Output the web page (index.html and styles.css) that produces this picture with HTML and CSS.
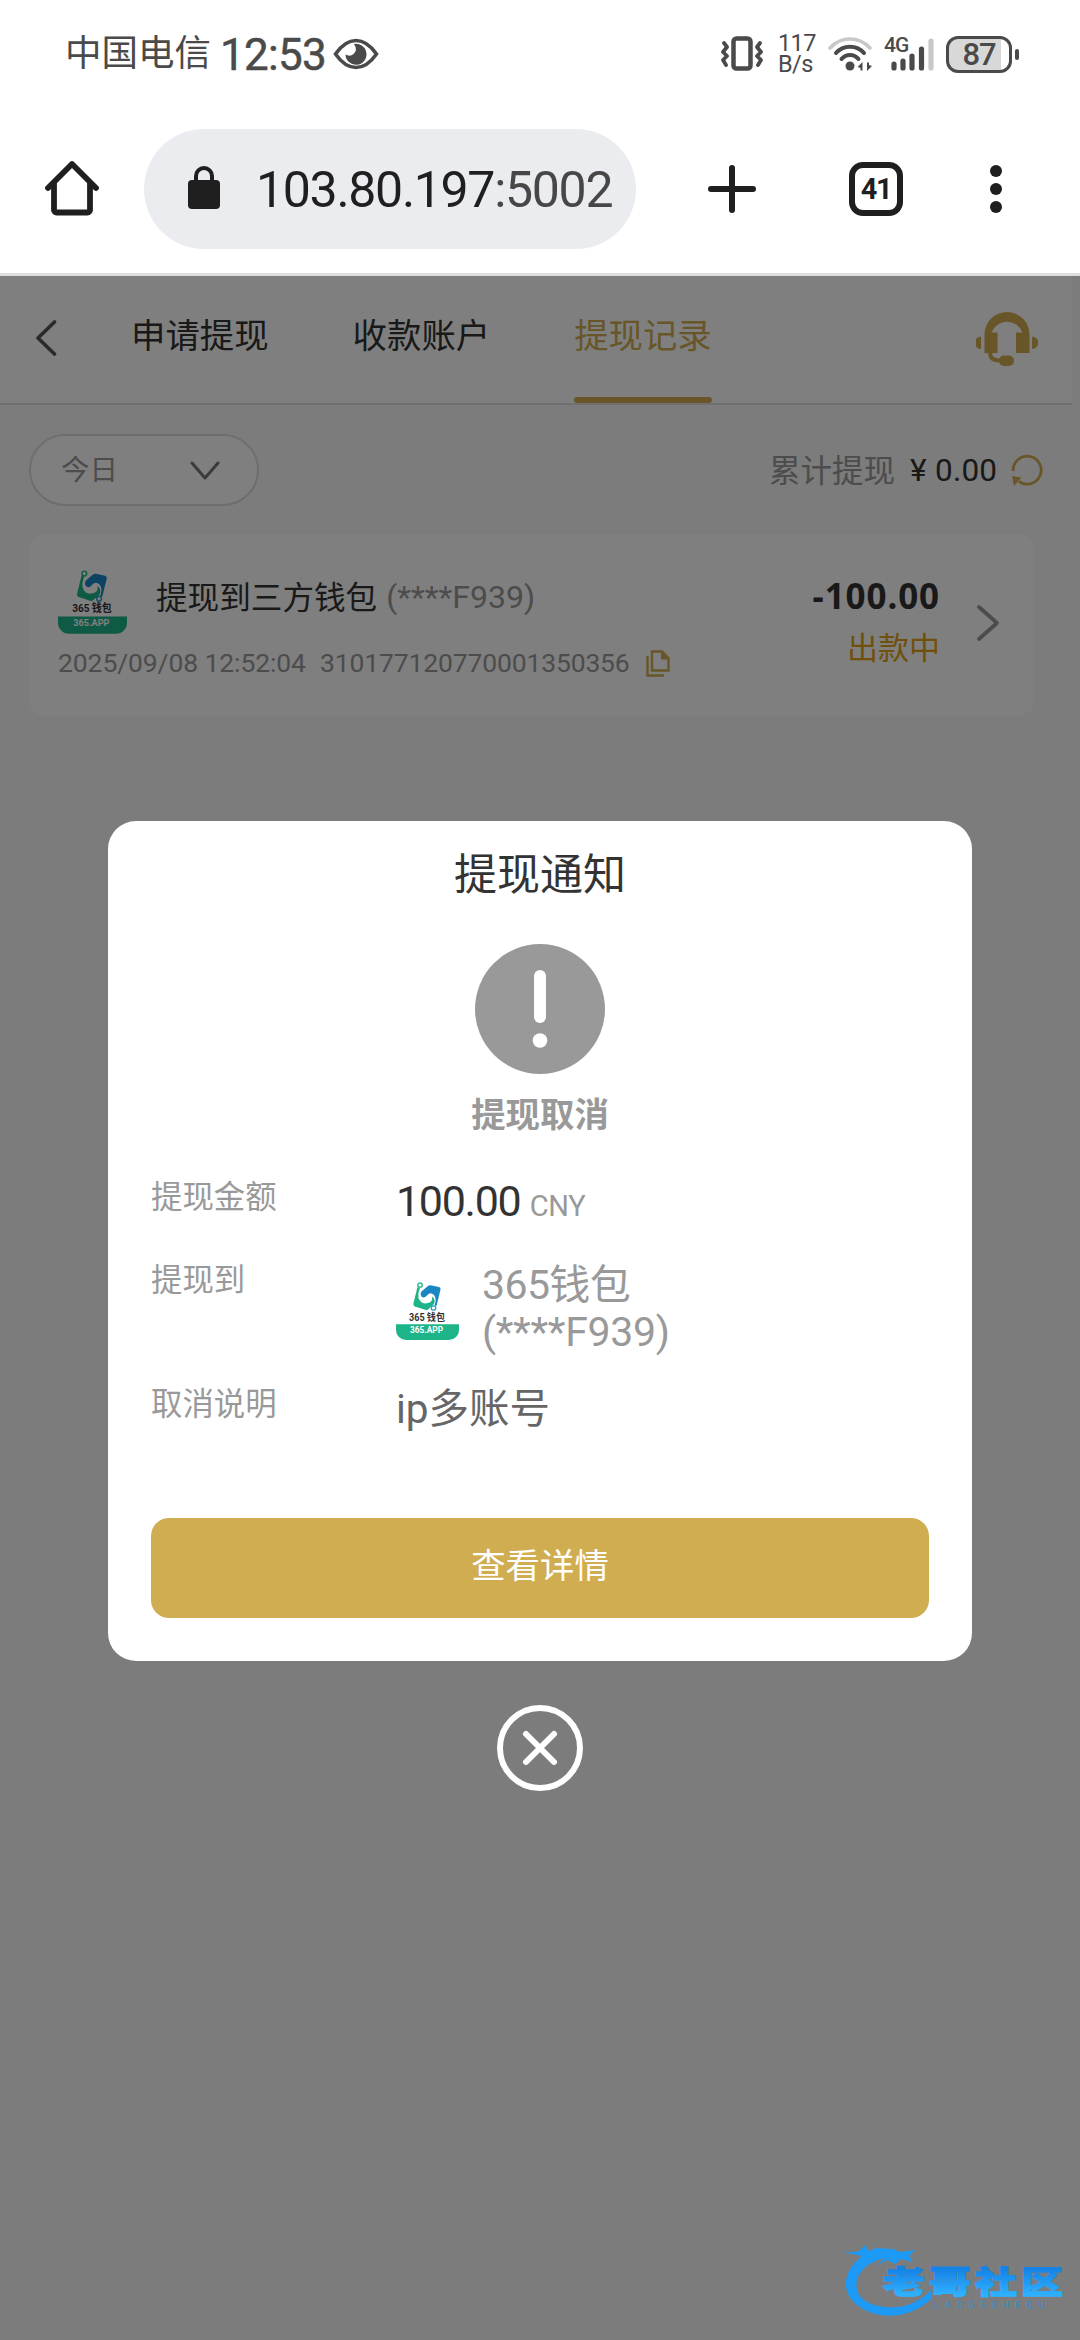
FILE: index.html
```html
<!DOCTYPE html>
<html lang="zh-CN">
<head>
<meta charset="utf-8">
<title>提现记录</title>
<link rel="stylesheet" href="styles.css">
</head>
<body>
<svg class="defs" width="0" height="0" aria-hidden="true">
  <defs>
    <symbol id="wallet" viewBox="0 0 63 58">
      <path d="M21.500 5 17.500 21Q17 24 19.500 24.700L30 28Q31 28.500 32 27.500L38 22Q40 17 36 14.500Q37 20 32 21Q25 23 22.500 16Q21.500 11 24 6Z" fill="#1fb488"/>
      <path d="M26 9 32 4Q33 3 34.500 3.300L43 5Q45 5.500 44.500 7.500L40.500 24 38.500 23.500Q41 17 38 13Q34 9.500 31 13.500Q28 17 25.500 14.500Q23.500 11.500 26 9Z" fill="#1a86c4"/>
      <circle cx="24" cy="3" r="2.200" fill="#fff" stroke="#1fb488" stroke-width="1.300"/>
      <circle cx="37.500" cy="26" r="2.200" fill="#fff" stroke="#2a9dc0" stroke-width="1.300"/>
      <text x="13" y="38.500" font-size="10" font-weight="700" fill="#333" textLength="36" lengthAdjust="spacingAndGlyphs">365 钱包</text>
      <path d="M0 42.300h63V48a10 10 0 0 1-10 10H10A10 10 0 0 1 0 48Z" fill="#1db489"/>
      <text x="14" y="51" font-size="8.500" font-weight="700" fill="#fff" textLength="33" lengthAdjust="spacingAndGlyphs">365.APP</text>
    </symbol>
  </defs>
</svg>

<div class="screen">
  <div class="status">
    <span class="carrier">中国电信</span>
    <span class="clock">12:53</span>
    <svg class="eye" width="46" height="32" viewBox="0 0 46 32"><path d="M2.500 16C15-2 31-2 43.500 16C31 34 15 34 2.500 16Z" fill="none" stroke="#4a4a4a" stroke-width="3.600"/><path d="M21 6A10.500 10.500 0 1 1 12.500 16.500Q17 19 20.500 16Q25 12 21 6Z" fill="#4a4a4a"/></svg>
    <svg class="vib" width="43" height="36" viewBox="0 0 43 36" fill="none" stroke="#4a4a4a"><rect x="12.500" y="2.500" width="17" height="30" rx="3" stroke-width="4.500"/><path d="m3 7 3 4-4 5 4 4-4 4 3 5M39 7l-3 4 4 5-4 4 4 4-3 5" stroke-width="3.800" stroke-linecap="round" stroke-linejoin="round"/></svg>
    <span class="speed"><span>117</span><span>B/s</span></span>
    <svg class="wifi" width="44" height="36" viewBox="0 0 44 36" fill="none" stroke-linecap="round"><path d="M2 12C13 0 31 0 42 12" stroke="#c8c8c8" stroke-width="3.600"/><path d="M8 17C15 8.500 29 8.500 36 17M13.500 23C18 17.500 26 17.500 30.500 23" stroke="#4a4a4a" stroke-width="4"/><circle cx="22" cy="30" r="4.500" fill="#4a4a4a"/><path d="m29.500 31 5-5v8.500h-2V32zM44 30l-5 5V26.500h2V29z" fill="#4a4a4a"/></svg>
    <span class="cell"><span class="gen">4G</span><svg width="50" height="36" viewBox="0 0 50 36" stroke-width="5.200" stroke-linecap="round" stroke="#4a4a4a"><path d="M10 28v4M19 25v7M28 20v12M37.500 13v19"/><path d="M47 5v27" stroke="#c8c8c8"/></svg></span>
    <span class="battery">87</span><i class="nub"></i>
  </div>

  <div class="toolbar">
    <svg class="home" width="54" height="56" viewBox="0 0 54 56" fill="none" stroke="#1f1f1f" stroke-width="5.800" stroke-linecap="round"><path d="M3 28 27 4 51 28" stroke-linejoin="round"/><path d="M9 24v26a2.500 2.500 0 0 0 2.500 2.500h31A2.500 2.500 0 0 0 45 50V24"/></svg>
    <div class="url">
      <svg width="32" height="43" viewBox="0 0 32 43"><path d="M8 16V10a8 8 0 0 1 16 0v6" fill="none" stroke="#1f1f1f" stroke-width="4"/><rect y="14" width="32" height="29" rx="4" fill="#1f1f1f"/></svg>
      <span>103.80.197<em>:5002</em></span>
    </div>
    <svg class="plus" width="48" height="48" viewBox="0 0 48 48" stroke="#1f1f1f" stroke-width="6" stroke-linecap="round"><path d="M24 3v42M3 24h42"/></svg>
    <span class="count">41</span>
    <svg class="dots" width="12" height="48" viewBox="0 0 12 48" fill="#1f1f1f"><circle cx="6" cy="6" r="6"/><circle cx="6" cy="24" r="6"/><circle cx="6" cy="42" r="6"/></svg>
  </div>

  <main class="page">
    <header class="head">
      <svg class="back" width="22" height="36" viewBox="0 0 22 36" fill="none" stroke="#555" stroke-width="3.600" stroke-linecap="round" stroke-linejoin="round"><path d="M19.500 2 3 18l16.500 16"/></svg>
      <nav class="tabs"><span>申请提现</span><span>收款账户</span><span class="on">提现记录</span></nav>
      <svg class="service" width="62" height="55" viewBox="0 0 62 55" fill="#d0ad50"><path d="M8.500 41V22.500a22.500 22.500 0 0 1 45 0V41H40V20.500h6.500A16.500 16.500 0 0 0 15.500 20.500h6V41Z"/><path d="M5 24.500a6.200 6.200 0 0 0 0 12.500zM56 24.500a6.200 6.200 0 0 1 0 12.500z"/><path d="M14 40q0 8.500 9 8.500h5" fill="none" stroke="#d0ad50" stroke-width="4"/><rect x="23" y="43.500" width="15" height="10.500" rx="5"/></svg>
    </header>

    <div class="filter">
      <div class="select"><span>今日</span><svg width="30" height="19" viewBox="0 0 30 19" fill="none" stroke="#777" stroke-width="3" stroke-linecap="round" stroke-linejoin="round"><path d="m2 2 13 15L28 2"/></svg></div>
      <div class="total"><span class="tl">累计提现</span><span class="yen">¥</span><span class="tv">0.00</span><svg width="32" height="34" viewBox="0 0 32 34"><path d="M2.200 18A14 14 0 1 1 8 28.500" fill="none" stroke="#d0ad50" stroke-width="2.800"/><path d="m1 23 9.500 1.500L3 33z" fill="#d0ad50"/></svg></div>
    </div>

    <section class="card">
      <div class="info">
        <div class="line1"><svg class="wl" width="69" height="64"><use href="#wallet"/></svg><span class="name">提现到三方钱包</span><span class="acct">(****F939)</span></div>
        <div class="line2"><span class="date">2025/09/08 12:52:04</span><span class="order">310177120770001350356</span><svg width="24" height="27" viewBox="0 0 24 27" fill="none" stroke="#d0ad50" stroke-width="2.400"><path d="M1.500 6v19.500H18M6 1.500h10l6.500 6.500v12.500H6z"/><path d="M15 1v8.500h8z" fill="#d0ad50" stroke="none"/></svg></div>
      </div>
      <div class="sum"><b>-100.00</b><span>出款中</span></div>
      <svg class="go" width="24" height="38" viewBox="0 0 24 38" fill="none" stroke="#999" stroke-width="3.800" stroke-linecap="round" stroke-linejoin="round"><path d="m3 3 18 16L3 35"/></svg>
    </section>

    <div class="overlay">
      <div class="modal">
        <h1>提现通知</h1>
        <svg class="warn" width="130" height="130" viewBox="0 0 130 130"><circle cx="65" cy="65" r="65" fill="#999"/><path d="M65 32v41" stroke="#fff" stroke-width="12" stroke-linecap="round"/><circle cx="65" cy="96.500" r="7.300" fill="#fff"/></svg>
        <h2>提现取消</h2>
        <dl>
          <dt>提现金额</dt><dd class="money">100.00 <small>CNY</small></dd>
          <dt>提现到</dt><dd class="wallet"><svg width="63" height="58"><use href="#wallet"/></svg><span>365钱包<br><i>(****F939)</i></span></dd>
          <dt>取消说明</dt><dd class="why">ip多账号</dd>
        </dl>
        <button type="button">查看详情</button>
      </div>
      <svg class="close" width="88" height="88" viewBox="0 0 88 88" fill="none" stroke="#fff" stroke-width="6" stroke-linecap="round"><circle cx="44" cy="44" r="40"/><path d="m30 30 28 28M58 30 30 58"/></svg>
    </div>

    <svg class="mark" width="226" height="76" viewBox="0 0 226 76">
      <defs><linearGradient id="lg-m" gradientUnits="userSpaceOnUse" x1="0" y1="-32" x2="0" y2="2"><stop stop-color="#1583e6"/><stop offset="1" stop-color="#2fb0ff"/></linearGradient></defs>
      <path d="M43 14C22 19 12 32 15 46C19 60 40 66 62 62Q78 58 89 46L90 54C75 69 52 76 30 69C6 60-1 44 7 27Q12 18 20 12L0 8Q10 9 17 7L23 1 27 7 35 4 51 5 59 8 73 6 67 12 71 18 59 15 53 20 46 16 35 21Z" fill="#1c9af6"/>
      <text transform="translate(41 49) scale(1 .74)" font-size="42" font-weight="900" fill="url(#lg-m)" stroke="url(#lg-m)" stroke-width="1.800" textLength="180" lengthAdjust="spacing">老哥社区</text>
      <text x="92" y="64" font-size="9" fill="#2b91d8" textLength="110">LAOGESHEQU</text>
    </svg>
  </main>
</div>
</body>
</html>
```
FILE: styles.css
```css
* { box-sizing: border-box; }
body { margin: 0; background: #fff; font-family: Roboto, "Noto Sans CJK SC", sans-serif; }
i, em { font-style: normal; }
svg { display: block; flex: none; }
.defs { position: absolute; }
.screen { width: 1080px; height: 2340px; display: flex; flex-direction: column; overflow: hidden; white-space: nowrap; }

/* status bar */
.status { height: 108px; display: flex; align-items: center; padding: 0 59px 0 65px; color: #4a4a4a; }
.carrier { width: 155px; font-size: 36.5px; line-height: 40px; }
.clock { width: 113px; padding-top: 1px; font-size: 44px; line-height: 44px; letter-spacing: -.7px; -webkit-text-stroke: .5px #4a4a4a; }
.eye { margin-right: 342px; }
.vib { margin-right: 14px; }
.speed { width: 50px; display: flex; flex-direction: column; font-size: 23.500px; line-height: 21.500px; letter-spacing: -.6px; }
.wifi { margin-right: 12px; }
.cell { position: relative; width: 52px; margin-right: 10px; }
.gen { position: absolute; left: 0; top: -1px; font-size: 21px; line-height: 21px; letter-spacing: -1px; font-weight: 500; }
.battery { width: 66px; height: 37px; border: 3px solid #4a4a4a; border-radius: 12px; background: linear-gradient(90deg, #d8d8d8 87%, #fff 87%); text-align: center; font-size: 31px; line-height: 31px; font-weight: 500; letter-spacing: -1px; }
.nub { width: 4px; height: 11px; margin-left: 3px; border-radius: 2px; background: #4a4a4a; }

/* browser toolbar */
.toolbar { height: 168px; padding: 21px 0 24px 45px; display: flex; align-items: flex-start; border-bottom: 3px solid #dedede; color: #1f1f1f; }
.home { margin: 31px 45px 0 0; }
.url { width: 492px; height: 120px; padding-left: 44px; display: flex; align-items: center; border-radius: 60px; background: #ebecf0; font-size: 50px; letter-spacing: -1.300px; }
.url svg { margin: -4px 36px 0 0; }
.url span { line-height: 60px; padding-top: 2px; }
.url em { color: #474747; }
.plus { margin: 36px 93px 0 72px; }
.count { width: 54px; height: 54px; margin-top: 33px; border: 6px solid #1f1f1f; border-radius: 14px; font-size: 29px; line-height: 43px; font-weight: 700; letter-spacing: -1.500px; text-align: center; }
.dots { margin: 36px 0 0 87px; }

/* page */
.page { flex: 1; position: relative; background: #f8f8f8; }
.head { width: 1072px; height: 129px; padding-left: 35px; display: flex; background: #fff; border-bottom: 2px solid #dedede; }
.back { margin: 44px 74px 0 0; }
.tabs { display: flex; gap: 84px; font-size: 34.4px; line-height: 121px; color: #333; }
.tabs span { width: 137.6px; height: 127px; }
.tabs .on { color: #d0ad50; }
.tabs .on::after { content: ""; display: block; height: 6px; border-radius: 3px; background: #d0ad50; }
.service { margin: 36px 34px 0 auto; }
.filter { height: 129px; padding: 29px 37px 0 29px; display: flex; justify-content: space-between; }
.select { width: 230px; height: 72px; padding: 0 37px 0 30px; display: flex; align-items: center; justify-content: space-between; border: 2px solid #dcdcdc; border-radius: 36px; background: #fff; font-size: 28.500px; color: #999; }
.select span { margin-top: -5px; }
.total { height: 72px; display: flex; align-items: center; font-size: 31.500px; color: #999; }
.tl { width: 141px; margin-top: -5px; }
.yen { width: 25px; color: #333; }
.tv { width: 76px; color: #333; letter-spacing: .2px; }
.card { width: 1005px; height: 182px; margin-left: 29px; padding-left: 29px; display: flex; border-radius: 16px; background: #fff; }
.info { width: 640px; padding-top: 36px; }
.line1 { height: 64px; display: flex; }
.name { margin-left: 29px; font-size: 31.6px; line-height: 57px; color: #333; }
.acct { margin-left: 9px; font-size: 32px; line-height: 55px; color: #999; }
.line2 { height: 54px; display: flex; align-items: center; padding-top: 3px; font-size: 26.500px; color: #999; }
.line2 svg { margin-top: 2px; }
.date { width: 262px; letter-spacing: -.1px; }
.order { width: 326px; letter-spacing: -.15px; }
.sum { width: 242px; padding-top: 40px; display: flex; flex-direction: column; align-items: flex-end; }
.sum b { font: 700 35px/44px "Noto Sans", sans-serif; letter-spacing: .9px; color: #333; }
.sum span { font-size: 31px; line-height: 61px; color: #e2a018; }
.go { margin: 70px 0 0 36px; }

/* dialog */
.overlay { position: absolute; inset: 0; padding-top: 545px; display: flex; flex-direction: column; align-items: center; background: rgba(0, 0, 0, .5); }
.modal { width: 864px; height: 840px; padding: 0 43px; display: flex; flex-direction: column; align-items: center; border-radius: 28px; background: #fff; }
h1 { margin: 0; height: 123px; font-size: 43px; line-height: 109px; font-weight: 400; color: #333; }
h2 { margin: 0; height: 88px; font-size: 34.4px; line-height: 82px; font-weight: 700; color: #999; }
dl { width: 778px; height: 356px; margin: 0; display: grid; grid-template-columns: 245px 1fr; grid-template-rows: 83px 124px 1fr; font-size: 31.4px; color: #999; }
dt { line-height: 72px; }
dd { margin: 0; }
.money { font-size: 43px; line-height: 78px; letter-spacing: -1.3px; color: #333; }
.money small { font-size: 29px; letter-spacing: -.3px; color: #999; }
.wallet { display: flex; padding-top: 17px; font-size: 41px; line-height: 46.500px; }
.wallet svg { margin: 20px 23px 0 0; }
.wallet span { letter-spacing: -.6px; }
.wallet i { letter-spacing: -.3px; }
.why { font-size: 40.500px; line-height: 80px; color: #666; }
button { width: 778px; height: 100px; border: 0; border-radius: 18px; background: #d0ad50; color: #fff; font: 34.4px/96px Roboto, "Noto Sans CJK SC", sans-serif; padding: 0 0 4px; }
.close { margin-top: 43px; }
.mark { position: absolute; right: 12px; bottom: 20px; }
```
